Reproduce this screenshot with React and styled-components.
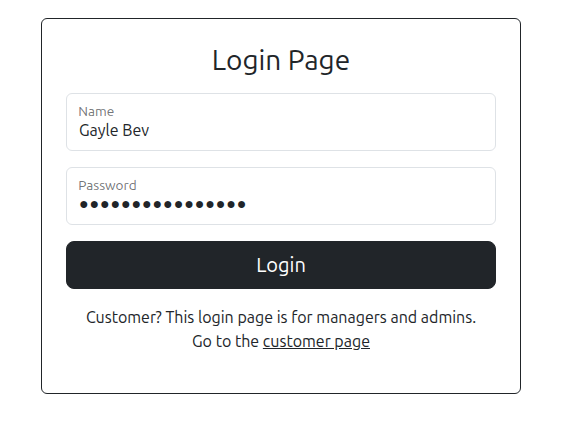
import React from "react";
import styled, { createGlobalStyle } from "styled-components";

const Global = createGlobalStyle`
  *, *::before, *::after { box-sizing: border-box; }
  body {
    margin: 0;
    font-family: Ubuntu, "Noto Sans", "Liberation Sans", Arial, sans-serif;
    font-size: 16px;
    line-height: 1.5;
    color: #212529;
    background: #fff;
  }
`;

const Page = styled.div`
  padding: 18px 43px 0 41px;
  display: flex;
  justify-content: center;
`;

const Card = styled.div`
  width: 480px;
  border: 1px solid #212529;
  border-radius: 6px;
  padding: 24px;
  display: flex;
  flex-direction: column;
`;

const Title = styled.h3`
  margin: 0 0 16px;
  font-size: 28px;
  font-weight: 400;
  line-height: 1.2;
  text-align: center;
`;

const Floating = styled.div`
  position: relative;
  margin-bottom: 16px;
`;

const Input = styled.input`
  display: block;
  width: 100%;
  height: 58px;
  padding: 26px 12px 10px;
  font: inherit;
  font-size: 16px;
  line-height: 1.25;
  letter-spacing: ${(p) => (p.$masked ? "0.85px" : "normal")};
  color: #212529;
  background: #fff;
  border: 1px solid #dee2e6;
  border-radius: 6px;
  outline: none;
`;

const Label = styled.label`
  position: absolute;
  top: 0;
  left: 0;
  padding: 16px 12px;
  font-size: 16px;
  line-height: 1.5;
  color: rgba(33, 37, 41, 0.65);
  transform-origin: 0 0;
  transform: scale(0.85) translateY(-7px) translateX(2.4px);
  pointer-events: none;
`;

const Button = styled.button`
  display: block;
  width: 100%;
  height: 48px;
  padding: 8px 16px;
  font: inherit;
  font-size: 20px;
  line-height: 1.5;
  color: #fff;
  background: #212529;
  border: 1px solid #212529;
  border-radius: 8px;
  margin-bottom: 16px;
  cursor: pointer;
`;

const Note = styled.p`
  margin: 0 0 16px;
  text-align: center;
`;

const Link = styled.a`
  color: #212529;
  text-decoration: underline;
`;

function Field({ id, label, value, masked }) {
  return (
    <Floating>
      <Input id={id} type="text" readOnly $masked={masked} value={value} />
      <Label htmlFor={id}>{label}</Label>
    </Floating>
  );
}

export default function App() {
  return (
    <>
      <Global />
      <Page>
        <Card>
          <Title>Login Page</Title>
          <Field id="name" label="Name" value="Gayle Bev" />
          <Field id="password" label="Password" value={"\u25CF".repeat(16)} masked />
          <Button>Login</Button>
          <Note>
            Customer? This login page is for managers and admins.
            <br />
            Go to the <Link href="#">customer page</Link>
          </Note>
        </Card>
      </Page>
    </>
  );
}
